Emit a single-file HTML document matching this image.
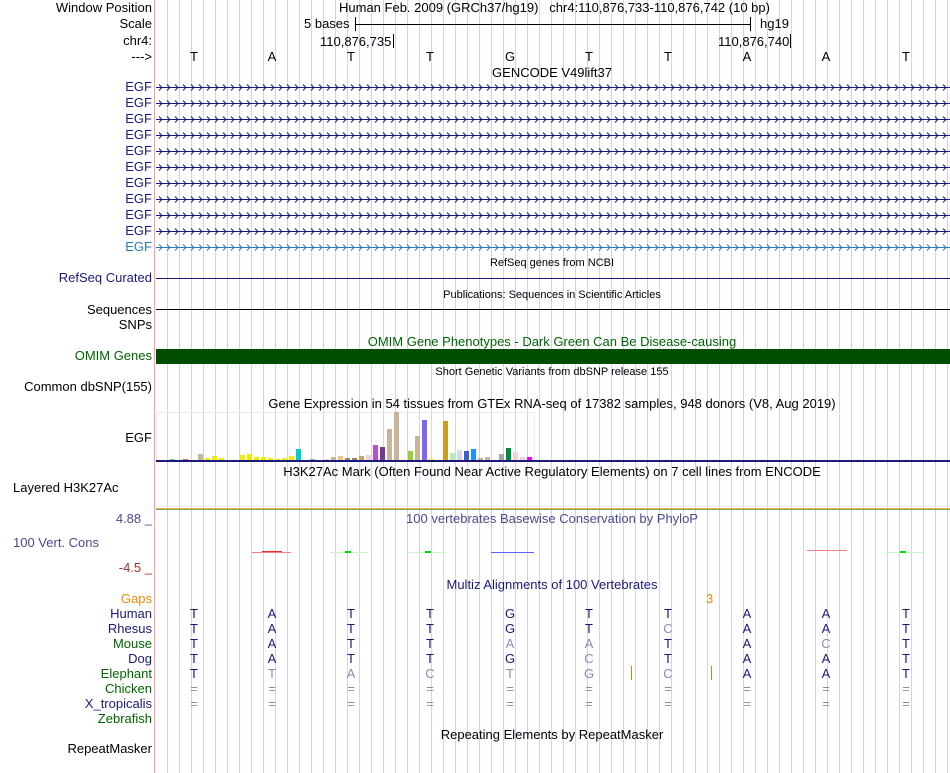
<!DOCTYPE html>
<html><head><meta charset="utf-8">
<style>
*{margin:0;padding:0;box-sizing:border-box}
body{width:950px;height:773px;overflow:hidden;background:#fff;font-family:"Liberation Sans",Arial,sans-serif;font-size:13px;color:#000;position:relative}
.grid{position:absolute;left:156px;top:0;width:794px;height:773px;background:repeating-linear-gradient(90deg,transparent 0,transparent 11px,#d2d2f2 11px,#d2d2f2 12px);background-position:0 0}
.vline{position:absolute;left:154px;top:0;width:1px;height:773px;background:#f4a0a0}
.t{position:absolute;white-space:nowrap;line-height:14px}
.l{position:absolute;right:798px;white-space:nowrap;line-height:14px;text-align:right}
.c{position:absolute;white-space:nowrap;line-height:14px;transform:translateX(-50%)}
.s{font-size:11px}
.n{color:#1a1a78}
.g{color:#006400}
.lt{color:#8a8ab8}
.b{position:absolute;bottom:313px;width:5px}
.h{position:absolute;height:1px}
</style></head><body>
<div class="grid"></div>
<div class="vline"></div>

<div class="l" style="top:1px">Window Position</div>
<div class="t" style="top:1px;left:339px">Human Feb. 2009 (GRCh37/hg19) &nbsp; chr4:110,876,733-110,876,742 (10 bp)</div>
<div class="l" style="top:17px">Scale</div>
<div class="t" style="top:17px;left:304px">5 bases</div>
<div class="h" style="top:24px;left:355px;width:396px;background:#000"></div>
<div style="position:absolute;left:355px;top:17px;width:1px;height:14px;background:#000"></div>
<div style="position:absolute;left:750px;top:17px;width:1px;height:14px;background:#000"></div>
<div class="t" style="top:17px;left:760px">hg19</div>
<div class="l" style="top:34px">chr4:</div>
<div class="t" style="top:35px;left:320px">110,876,735</div>
<div style="position:absolute;left:393px;top:34px;width:1px;height:14px;background:#000"></div>
<div class="t" style="top:35px;left:718px">110,876,740</div>
<div style="position:absolute;left:790px;top:34px;width:1px;height:14px;background:#000"></div>
<div class="l" style="top:50px">---&gt;</div>
<div class="c" style="top:50px;left:194px">T</div><div class="c" style="top:50px;left:272px">A</div><div class="c" style="top:50px;left:351px">T</div><div class="c" style="top:50px;left:430px">T</div><div class="c" style="top:50px;left:510px">G</div><div class="c" style="top:50px;left:589px">T</div><div class="c" style="top:50px;left:668px">T</div><div class="c" style="top:50px;left:747px">A</div><div class="c" style="top:50px;left:826px">A</div><div class="c" style="top:50px;left:906px">T</div>
<div class="c" style="top:66px;left:552px">GENCODE V49lift37</div>

<svg style="position:absolute;left:156px;top:80px" width="794" height="172">
<defs>
<pattern id="ar" x="0" y="0" width="8" height="16" patternUnits="userSpaceOnUse"><path d="M3 4.5 L6 7.5 L3 10.5" fill="none" stroke="#1a1a78" stroke-width="1"/></pattern>
<pattern id="ar2" x="0" y="0" width="8" height="16" patternUnits="userSpaceOnUse"><path d="M3 4.5 L6 7.5 L3 10.5" fill="none" stroke="#2a7ab8" stroke-width="1"/></pattern>
</defs>
<g fill="#1a1a78">
<rect x="0" y="7" width="794" height="1"/><rect x="0" y="23" width="794" height="1"/><rect x="0" y="39" width="794" height="1"/><rect x="0" y="55" width="794" height="1"/><rect x="0" y="71" width="794" height="1"/><rect x="0" y="87" width="794" height="1"/><rect x="0" y="103" width="794" height="1"/><rect x="0" y="119" width="794" height="1"/><rect x="0" y="135" width="794" height="1"/><rect x="0" y="151" width="794" height="1"/>
</g>
<rect x="0" y="167" width="794" height="1" fill="#2a7ab8"/>
<rect x="0" y="0" width="794" height="160" fill="url(#ar)"/>
<rect x="0" y="160" width="794" height="12" fill="url(#ar2)"/>
</svg>
<div class="l n" style="top:80px">EGF</div><div class="l n" style="top:96px">EGF</div><div class="l n" style="top:112px">EGF</div><div class="l n" style="top:128px">EGF</div><div class="l n" style="top:144px">EGF</div><div class="l n" style="top:160px">EGF</div><div class="l n" style="top:176px">EGF</div><div class="l n" style="top:192px">EGF</div><div class="l n" style="top:208px">EGF</div><div class="l n" style="top:224px">EGF</div><div class="l" style="top:240px;color:#2a7ab8">EGF</div>

<div class="c s" style="top:256px;left:552px">RefSeq genes from NCBI</div>
<div class="l n" style="top:271px">RefSeq Curated</div>
<div class="h" style="top:278px;left:156px;width:794px;background:#1a1a78"></div>
<div class="c s" style="top:288px;left:552px">Publications: Sequences in Scientific Articles</div>
<div class="l" style="top:303px">Sequences</div>
<div class="h" style="top:309px;left:156px;width:794px;background:#000"></div>
<div class="l" style="top:318px">SNPs</div>
<div class="c g" style="top:335px;left:552px">OMIM Gene Phenotypes - Dark Green Can Be Disease-causing</div>
<div class="l g" style="top:349px">OMIM Genes</div>
<div style="position:absolute;top:349px;left:156px;width:794px;height:15px;background:#004d00"></div>
<div class="c s" style="top:365px;left:552px">Short Genetic Variants from dbSNP release 155</div>
<div class="l" style="top:380px">Common dbSNP(155)</div>
<div class="c" style="top:397px;left:552px">Gene Expression in 54 tissues from GTEx RNA-seq of 17382 samples, 948 donors (V8, Aug 2019)</div>
<div class="l" style="top:431px">EGF</div>
<div style="position:absolute;top:412px;left:156px;width:379px;height:49px;border:1px solid #ececec"></div>
<div class="b" style="left:170px;height:1px;background:#8fbc8f"></div>
<div class="b" style="left:183px;height:1px;background:#e06060"></div>
<div class="b" style="left:198px;height:6px;background:#c8b49a"></div>
<div class="b" style="left:205px;height:2px;background:#eeee00"></div>
<div class="b" style="left:212px;height:4px;background:#eeee00"></div>
<div class="b" style="left:219px;height:2px;background:#eeee00"></div>
<div class="b" style="left:240px;height:5px;background:#eeee00"></div>
<div class="b" style="left:247px;height:6px;background:#eeee00"></div>
<div class="b" style="left:254px;height:3px;background:#eeee00"></div>
<div class="b" style="left:261px;height:3px;background:#eeee00"></div>
<div class="b" style="left:268px;height:2px;background:#eeee00"></div>
<div class="b" style="left:275px;height:1px;background:#eeee00"></div>
<div class="b" style="left:282px;height:2px;background:#eeee00"></div>
<div class="b" style="left:289px;height:4px;background:#eeee00"></div>
<div class="b" style="left:296px;height:11px;background:#00cdcd"></div>
<div class="b" style="left:310px;height:1px;background:#9ab"></div>
<div class="b" style="left:324px;height:1px;background:#eecccc"></div>
<div class="b" style="left:331px;height:3px;background:#c8b49a"></div>
<div class="b" style="left:338px;height:4px;background:#eec591"></div>
<div class="b" style="left:345px;height:2px;background:#a0826a"></div>
<div class="b" style="left:352px;height:2px;background:#a0826a"></div>
<div class="b" style="left:359px;height:4px;background:#cd9f72"></div>
<div class="b" style="left:366px;height:5px;background:#eed5d2"></div>
<div class="b" style="left:373px;height:15px;background:#b452cd"></div>
<div class="b" style="left:380px;height:13px;background:#7a378b"></div>
<div class="b" style="left:387px;height:31px;background:#c8b49a"></div>
<div class="b" style="left:394px;height:48px;background:#c8b49a"></div>
<div class="b" style="left:408px;height:9px;background:#9acd32"></div>
<div class="b" style="left:415px;height:24px;background:#c8b49a"></div>
<div class="b" style="left:422px;height:40px;background:#7b68ee"></div>
<div class="b" style="left:429px;height:1px;background:#eeee00"></div>
<div class="b" style="left:443px;height:39px;background:#cd9b1d"></div>
<div class="b" style="left:450px;height:7px;background:#b4eeb4"></div>
<div class="b" style="left:457px;height:10px;background:#d9d9d9"></div>
<div class="b" style="left:464px;height:9px;background:#3a5fcd"></div>
<div class="b" style="left:471px;height:11px;background:#1e90ff"></div>
<div class="b" style="left:478px;height:2px;background:#c8b49a"></div>
<div class="b" style="left:485px;height:3px;background:#c8b49a"></div>
<div class="b" style="left:499px;height:6px;background:#a6a6a6"></div>
<div class="b" style="left:506px;height:12px;background:#008b45"></div>
<div class="b" style="left:513px;height:8px;background:#eed5d2"></div>
<div class="b" style="left:520px;height:3px;background:#eed5d2"></div>
<div class="b" style="left:527px;height:3px;background:#ff00ff"></div>
<div style="position:absolute;top:460px;left:156px;width:794px;height:2px;background:#1a1a78"></div>

<div class="c" style="top:465px;left:552px">H3K27Ac Mark (Often Found Near Active Regulatory Elements) on 7 cell lines from ENCODE</div>
<div class="t" style="top:481px;left:13px">Layered H3K27Ac</div>
<div class="h" style="top:508px;left:156px;width:794px;background:#f0b040"></div>
<div class="h" style="top:509px;left:156px;width:794px;background:#70b060"></div>

<div class="l" style="top:512px;color:#4a4a90">4.88 _</div>
<div class="c" style="top:512px;left:552px;color:#4a4a90">100 vertebrates Basewise Conservation by PhyloP</div>
<div class="t" style="top:536px;left:13px;color:#4a4a90">100 Vert. Cons</div>
<div class="l" style="top:561px;color:#a03030">-4.5 _</div>
<div class="h" style="top:552px;left:252px;width:39px;background:#f08080"></div>
<div class="h" style="top:551px;left:262px;width:20px;background:#e03030"></div>
<div class="h" style="top:552px;left:330px;width:38px;background:#c8f8c8"></div>
<div style="position:absolute;top:551px;left:345px;width:6px;height:2px;background:#00e000"></div>
<div class="h" style="top:552px;left:409px;width:37px;background:#c8f8c8"></div>
<div style="position:absolute;top:551px;left:425px;width:6px;height:2px;background:#00e000"></div>
<div class="h" style="top:552px;left:491px;width:43px;background:#6060ff"></div>
<div class="h" style="top:550px;left:807px;width:40px;background:#f08080"></div>
<div class="h" style="top:552px;left:885px;width:38px;background:#c8f8c8"></div>
<div style="position:absolute;top:551px;left:900px;width:6px;height:2px;background:#00e000"></div>

<div class="c n" style="top:578px;left:552px">Multiz Alignments of 100 Vertebrates</div>
<div class="l" style="top:592px;color:#f08c00">Gaps</div>
<div class="t" style="top:592px;left:706px;color:#f08c00">3</div>

<div class="l n" style="top:607px">Human</div>
<div class="l n" style="top:622px">Rhesus</div>
<div class="l g" style="top:637px">Mouse</div>
<div class="l n" style="top:652px">Dog</div>
<div class="l g" style="top:667px">Elephant</div>
<div class="l g" style="top:682px">Chicken</div>
<div class="l n" style="top:697px">X_tropicalis</div>
<div class="l g" style="top:712px">Zebrafish</div>

<div class="n">
<div class="c" style="top:607px;left:194px">T</div><div class="c" style="top:607px;left:272px">A</div><div class="c" style="top:607px;left:351px">T</div><div class="c" style="top:607px;left:430px">T</div><div class="c" style="top:607px;left:510px">G</div><div class="c" style="top:607px;left:589px">T</div><div class="c" style="top:607px;left:668px">T</div><div class="c" style="top:607px;left:747px">A</div><div class="c" style="top:607px;left:826px">A</div><div class="c" style="top:607px;left:906px">T</div>

<div class="c" style="top:622px;left:194px">T</div><div class="c" style="top:622px;left:272px">A</div><div class="c" style="top:622px;left:351px">T</div><div class="c" style="top:622px;left:430px">T</div><div class="c" style="top:622px;left:510px">G</div><div class="c" style="top:622px;left:589px">T</div><div class="c lt" style="top:622px;left:668px">C</div><div class="c" style="top:622px;left:747px">A</div><div class="c" style="top:622px;left:826px">A</div><div class="c" style="top:622px;left:906px">T</div>

<div class="c" style="top:637px;left:194px">T</div><div class="c" style="top:637px;left:272px">A</div><div class="c" style="top:637px;left:351px">T</div><div class="c" style="top:637px;left:430px">T</div><div class="c lt" style="top:637px;left:510px">A</div><div class="c lt" style="top:637px;left:589px">A</div><div class="c" style="top:637px;left:668px">T</div><div class="c" style="top:637px;left:747px">A</div><div class="c lt" style="top:637px;left:826px">C</div><div class="c" style="top:637px;left:906px">T</div>

<div class="c" style="top:652px;left:194px">T</div><div class="c" style="top:652px;left:272px">A</div><div class="c" style="top:652px;left:351px">T</div><div class="c" style="top:652px;left:430px">T</div><div class="c" style="top:652px;left:510px">G</div><div class="c lt" style="top:652px;left:589px">C</div><div class="c" style="top:652px;left:668px">T</div><div class="c" style="top:652px;left:747px">A</div><div class="c" style="top:652px;left:826px">A</div><div class="c" style="top:652px;left:906px">T</div>

<div class="c" style="top:667px;left:194px">T</div><div class="c lt" style="top:667px;left:272px">T</div><div class="c lt" style="top:667px;left:351px">A</div><div class="c lt" style="top:667px;left:430px">C</div><div class="c lt" style="top:667px;left:510px">T</div><div class="c lt" style="top:667px;left:589px">G</div><div class="c lt" style="top:667px;left:668px">C</div><div class="c" style="top:667px;left:747px">A</div><div class="c" style="top:667px;left:826px">A</div><div class="c" style="top:667px;left:906px">T</div>
</div>
<div style="position:absolute;top:666px;left:631px;width:1px;height:14px;background:#e08000"></div>
<div style="position:absolute;top:666px;left:711px;width:1px;height:14px;background:#e08000"></div>

<div class="lt">
<div class="c" style="top:682px;left:194px">=</div><div class="c" style="top:682px;left:272px">=</div><div class="c" style="top:682px;left:351px">=</div><div class="c" style="top:682px;left:430px">=</div><div class="c" style="top:682px;left:510px">=</div><div class="c" style="top:682px;left:589px">=</div><div class="c" style="top:682px;left:668px">=</div><div class="c" style="top:682px;left:747px">=</div><div class="c" style="top:682px;left:826px">=</div><div class="c" style="top:682px;left:906px">=</div>
<div class="c" style="top:697px;left:194px">=</div><div class="c" style="top:697px;left:272px">=</div><div class="c" style="top:697px;left:351px">=</div><div class="c" style="top:697px;left:430px">=</div><div class="c" style="top:697px;left:510px">=</div><div class="c" style="top:697px;left:589px">=</div><div class="c" style="top:697px;left:668px">=</div><div class="c" style="top:697px;left:747px">=</div><div class="c" style="top:697px;left:826px">=</div><div class="c" style="top:697px;left:906px">=</div>
</div>

<div class="c" style="top:728px;left:552px">Repeating Elements by RepeatMasker</div>
<div class="l" style="top:742px">RepeatMasker</div>
</body></html>
